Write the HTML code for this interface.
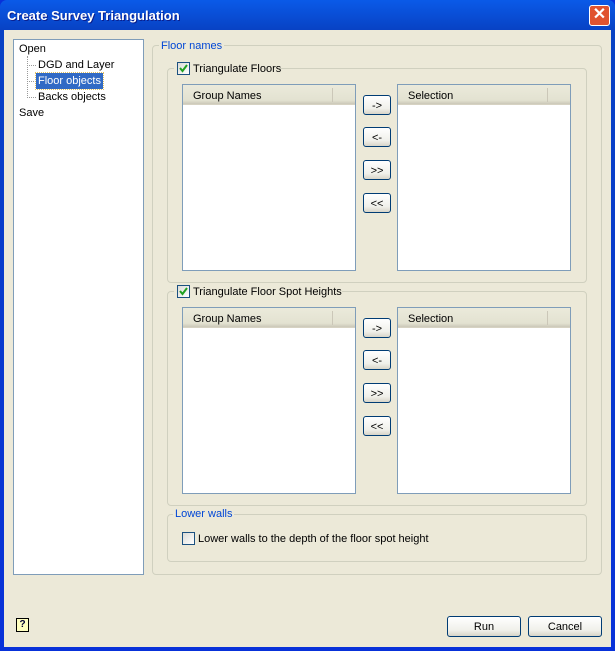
<!DOCTYPE html>
<html><head><style>
*{box-sizing:border-box;margin:0;padding:0}
body{width:615px;height:651px;overflow:hidden;font-family:Tahoma,"Liberation Sans",sans-serif;font-size:11px;color:#000;background:#0831d9}
.win{position:absolute;left:0;top:0;width:615px;height:651px;background:linear-gradient(#0a5ae8,#0842c4 30px,#0831d9);border-radius:7px 7px 0 0}
.title{position:absolute;left:7px;top:8px;color:#fff;font-weight:bold;font-size:13px;text-shadow:1px 1px #0a1e8c}
.close{position:absolute;left:589px;top:5px;width:21px;height:21px;background:#e0532f;border:1px solid #fff;border-radius:3px;color:#fff;font-size:16px;line-height:18px;text-align:center;font-weight:bold}
.client{position:absolute;left:4px;top:30px;width:607px;height:617px;background:#ece9d8}
.a{position:absolute}
.tree{left:13px;top:39px;width:131px;height:536px;background:#fff;border:1px solid #7f9db9}
.grp{border:1px solid #d0d0bf;border-radius:4px}
.lbl{position:absolute;background:#ece9d8;color:#0046d5;padding:0 2px;line-height:17px}
.list{background:#fff;border:1px solid #7f9db9}
.hdr{height:20px;background:linear-gradient(#ebeadb,#e3e2d1 80%,#cbc7b8);border-bottom:1px solid #d6d2c2;padding:5px 0 0 10px;position:relative}
.hdr:after{content:"";position:absolute;left:149px;top:3px;width:1px;height:14px;background:#cbc7b8}
.btn{position:absolute;width:28px;height:20px;border:1px solid #003c74;border-radius:3px;background:linear-gradient(#fff,#f0f0ea 70%,#d8d5c8);text-align:center;line-height:20px}
.cb{position:absolute;width:13px;height:13px;border:1px solid #1c5180;background:linear-gradient(135deg,#dcdcd7,#fff)}
.tx{position:absolute;white-space:nowrap;line-height:17px}
.big{position:absolute;width:74px;height:21px;border:1px solid #003c74;border-radius:3px;background:linear-gradient(#fff,#f0f0ea 70%,#d8d5c8);text-align:center;line-height:21px}
</style></head><body>
<div class="win">
<div class="title">Create Survey Triangulation</div>
<div class="close">✕</div>
</div>
<div class="client"></div>
<div class="a tree"></div>
<div class="tx" style="left:19px;top:41px">Open</div>
<div class="a" style="left:27px;top:56px;width:1px;height:42px;border-left:1px dotted #999"></div>
<div class="a" style="left:27px;top:65px;width:9px;border-top:1px dotted #999"></div>
<div class="a" style="left:27px;top:81px;width:9px;border-top:1px dotted #999"></div>
<div class="a" style="left:27px;top:97px;width:9px;border-top:1px dotted #999"></div>
<div class="tx" style="left:38px;top:57px">DGD and Layer</div>
<div class="tx" style="left:36px;top:73px;background:#316ac5;color:#fff;padding:0 2px;height:16px;line-height:16px;outline:1px dotted #e0c060">Floor objects</div>
<div class="tx" style="left:38px;top:89px">Backs objects</div>
<div class="tx" style="left:19px;top:105px">Save</div>

<div class="a grp" style="left:152px;top:45px;width:450px;height:530px"></div>
<div class="lbl" style="left:159px;top:38px">Floor names</div>

<div class="a grp" style="left:167px;top:68px;width:420px;height:215px"></div>
<div class="lbl" style="left:174px;top:62px;width:106px;height:14px"></div>
<div class="cb" style="left:177px;top:62px"><svg width="11" height="11" style="position:absolute;left:0;top:0"><path d="M2 5 L4.5 8 L9 2" stroke="#21a121" stroke-width="2" fill="none"/></svg></div>
<div class="tx" style="left:193px;top:61px">Triangulate Floors</div>
<div class="a list" style="left:182px;top:84px;width:174px;height:187px"><div class="hdr">Group Names</div></div>
<div class="a list" style="left:397px;top:84px;width:174px;height:187px"><div class="hdr">Selection</div></div>
<div class="btn" style="left:363px;top:95px">-&gt;</div>
<div class="btn" style="left:363px;top:127px">&lt;-</div>
<div class="btn" style="left:363px;top:160px">&gt;&gt;</div>
<div class="btn" style="left:363px;top:193px">&lt;&lt;</div>

<div class="a grp" style="left:167px;top:291px;width:420px;height:215px"></div>
<div class="lbl" style="left:174px;top:285px;width:168px;height:14px"></div>
<div class="cb" style="left:177px;top:285px"><svg width="11" height="11" style="position:absolute;left:0;top:0"><path d="M2 5 L4.5 8 L9 2" stroke="#21a121" stroke-width="2" fill="none"/></svg></div>
<div class="tx" style="left:193px;top:284px">Triangulate Floor Spot Heights</div>
<div class="a list" style="left:182px;top:307px;width:174px;height:187px"><div class="hdr">Group Names</div></div>
<div class="a list" style="left:397px;top:307px;width:174px;height:187px"><div class="hdr">Selection</div></div>
<div class="btn" style="left:363px;top:318px">-&gt;</div>
<div class="btn" style="left:363px;top:350px">&lt;-</div>
<div class="btn" style="left:363px;top:383px">&gt;&gt;</div>
<div class="btn" style="left:363px;top:416px">&lt;&lt;</div>

<div class="a grp" style="left:167px;top:514px;width:420px;height:48px"></div>
<div class="lbl" style="left:173px;top:506px">Lower walls</div>
<div class="cb" style="left:182px;top:532px"></div>
<div class="tx" style="left:198px;top:531px">Lower walls to the depth of the floor spot height</div>

<div class="a" style="left:16px;top:618px;width:13px;height:14px;border:1px solid #000;background:#ffffc0;font-weight:bold;font-size:10px;text-align:center;line-height:12px;color:#003">?</div>
<div class="big" style="left:447px;top:616px">Run</div>
<div class="big" style="left:528px;top:616px">Cancel</div>
</body></html>
